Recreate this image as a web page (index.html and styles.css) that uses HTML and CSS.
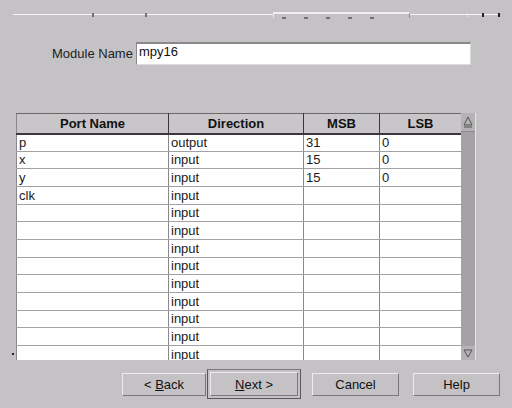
FILE: index.html
```html
<!DOCTYPE html>
<html>
<head>
<meta charset="utf-8">
<link rel="stylesheet" href="styles.css">
</head>
<body>
<div class="dialog">
  <div class="tabstrip">
    <div class="seg seg-a"><span class="mark m1"></span><span class="mark m2"></span></div>
    <div class="seg tab"><span class="tmark"></span><span class="tmark"></span><span class="tmark"></span><span class="tmark"></span><span class="tmark"></span></div>
    <div class="seg seg-b"><span class="mark m3"></span><span class="mark m4"></span><span class="mark m5"></span></div>
  </div>

  <div class="module-row">
    <label class="module-label">Module Name</label>
    <div class="text-input">mpy16</div>
  </div>

  <div class="table-area">
    <span class="dot"></span>
    <div class="table-clip">
      <table class="ports">
        <colgroup><col class="c1"><col class="c2"><col class="c3"><col class="c4"></colgroup>
        <thead>
          <tr><th>Port Name</th><th>Direction</th><th>MSB</th><th>LSB</th></tr>
        </thead>
        <tbody>
          <tr><td>p</td><td>output</td><td>31</td><td>0</td></tr>
          <tr><td>x</td><td>input</td><td>15</td><td>0</td></tr>
          <tr><td>y</td><td>input</td><td>15</td><td>0</td></tr>
          <tr><td>clk</td><td>input</td><td></td><td></td></tr>
          <tr><td></td><td>input</td><td></td><td></td></tr>
          <tr><td></td><td>input</td><td></td><td></td></tr>
          <tr><td></td><td>input</td><td></td><td></td></tr>
          <tr><td></td><td>input</td><td></td><td></td></tr>
          <tr><td></td><td>input</td><td></td><td></td></tr>
          <tr><td></td><td>input</td><td></td><td></td></tr>
          <tr><td></td><td>input</td><td></td><td></td></tr>
          <tr><td></td><td>input</td><td></td><td></td></tr>
          <tr><td></td><td>input</td><td></td><td></td></tr>
        </tbody>
      </table>
    </div>
    <div class="scrollbar">
      <div class="sb-btn sb-up">
        <svg width="12" height="14" viewBox="0 0 12 14"><path d="M6 2 L10 10 L2 10 Z" fill="none" stroke="#555" stroke-width="1"/><line x1="2" y1="12" x2="10" y2="12" stroke="#555"/></svg>
      </div>
      <div class="sb-track"></div>
      <div class="sb-btn sb-down">
        <svg width="12" height="12" viewBox="0 0 12 12"><path d="M2 3 L10 3 L6 10 Z" fill="none" stroke="#555" stroke-width="1"/></svg>
      </div>
    </div>
  </div>

  <div class="buttons">
    <button class="btn btn-back">&lt; <u>B</u>ack</button>
    <div class="default-frame"><button class="btn btn-next"><u>N</u>ext &gt;</button></div>
    <button class="btn btn-cancel">Cancel</button>
    <button class="btn btn-help">Help</button>
  </div>
</div>
</body>
</html>
```

FILE: styles.css
```css
html, body {
  margin: 0;
  padding: 0;
  background: #c4c2c4;
}
.dialog {
  width: 512px;
  height: 408px;
  overflow: hidden;
  background: #c4c2c4;
  font-family: "Liberation Sans", Arial, sans-serif;
  font-size: 13px;
  color: #1a1a1a;
}

/* tab strip remnant */
.tabstrip {
  display: flex;
  align-items: flex-start;
  height: 20px;
  padding-top: 12px;
  padding-left: 13px;
  box-sizing: border-box;
}
.seg {
  display: flex;
  position: relative;
  height: 6px;
  border-top: 1px solid #f4f4f4;
  margin-top: 2px;
}
.seg-a { width: 260px; }
.tab {
  width: 137px;
  margin-top: 0;
  border-top: 2px solid #f0f0f0;
  border-left: 1px solid #e8e8e8;
  border-right: 1px solid #909090;
  gap: 18px;
  padding-left: 8px;
  box-sizing: border-box;
}
.seg-b { width: 90px; }
.mark {
  position: absolute;
  top: -2px;
  width: 2px;
  height: 4px;
  background: #707070;
}
.m1 { left: 79px; }
.m2 { left: 132px; }
.m3 { left: 57px; background: #e8e8e8; width: 1px; }
.m4 { left: 72px; background: #202020; }
.m5 { left: 88px; background: #202020; }
.tmark {
  width: 4px;
  height: 2px;
  margin-top: 3px;
  background: #707070;
}

/* module name row */
.module-row {
  display: flex;
  align-items: center;
  margin-top: 22px;
  padding-left: 52px;
  height: 23px;
}
.module-label {
  width: 84px;
  color: #222;
  font-size: 13px;
}
.text-input {
  width: 335px;
  height: 23px;
  box-sizing: border-box;
  background: #fff;
  border-top: 2px solid #8a888a;
  border-left: 1px solid #8a888a;
  border-right: 1px solid #dcdcdc;
  border-bottom: 1px solid #dcdcdc;
  padding: 1px 0 0 2px;
  font-size: 13px;
  line-height: 14px;
  color: #111;
}

/* table */
.table-area {
  display: flex;
  margin-top: 48px;
  padding-left: 12px;
  height: 247px;
}
.dot {
  width: 2px;
  height: 2px;
  background: #222;
  align-self: flex-end;
  margin-bottom: 5px;
  margin-right: 2px;
}
.table-clip {
  width: 445px;
  height: 247px;
  overflow: hidden;
  background: #c4c2c4;
}
.ports {
  border-collapse: collapse;
  table-layout: fixed;
  width: 445px;
}
.c1 { width: 152px; }
.c2 { width: 135px; }
.c3 { width: 76px; }
.c4 { width: 82px; }
.ports th {
  height: 20px;
  padding: 0;
  box-sizing: border-box;
  background: #c8c6c8;
  font-weight: bold;
  font-size: 13px;
  color: #111;
  text-align: center;
  border-top: 1px solid #6a686a;
  border-bottom: 2px solid #3a383a;
  border-left: 1px solid #3a383a;
  border-right: 1px solid #3a383a;
}
.ports th:first-child { border-left: 1px solid #8a888a; }
.ports td {
  height: 17.67px;
  padding: 0 0 0 2px;
  box-sizing: border-box;
  background: #fff;
  font-size: 13px;
  line-height: 15px;
  color: #1a1a1a;
  border-bottom: 1px solid #a2a0a2;
  border-left: 1px solid #8a888a;
  border-right: 1px solid #8a888a;
  white-space: nowrap;
  overflow: hidden;
}
.ports td:first-child { border-left: 1px solid #8a888a; }

/* scrollbar */
.scrollbar {
  width: 15px;
  height: 247px;
  display: flex;
  flex-direction: column;
  background: #a4a2a4;
  border-right: 1px solid #e4e4e4;
  box-sizing: border-box;
}
.sb-btn {
  height: 16px;
  display: flex;
  align-items: center;
  justify-content: center;
  background: #a4a2a4;
}
.sb-up {
  height: 18px;
  background: #b4b2b4;
  border-bottom: 1px solid #8a888a;
}
.sb-track { flex: 1; }
.sb-down {
  height: 14px;
  background: #b4b2b4;
}

/* buttons */
.buttons {
  display: flex;
  align-items: center;
  margin-top: 9px;
  padding-left: 122px;
  height: 30px;
}
.btn {
  height: 23px;
  box-sizing: border-box;
  background: #c4c2c4;
  font-family: "Liberation Sans", Arial, sans-serif;
  font-size: 13px;
  color: #111;
  border-top: 1px solid #ececec;
  border-left: 1px solid #ececec;
  border-right: 1px solid #7a787a;
  border-bottom: 1px solid #7a787a;
  padding: 0;
  margin: 0;
}
.btn-back { width: 84px; }
.default-frame {
  margin-left: 1px;
  width: 94px;
  height: 30px;
  box-sizing: border-box;
  border: 1px solid #5a585a;
  border-top-color: #7a787a;
  display: flex;
  align-items: center;
  justify-content: center;
}
.btn-next { width: 88px; height: 24px; }
.btn-cancel { width: 87px; margin-left: 11px; }
.btn-help { width: 87px; margin-left: 14px; }
```
